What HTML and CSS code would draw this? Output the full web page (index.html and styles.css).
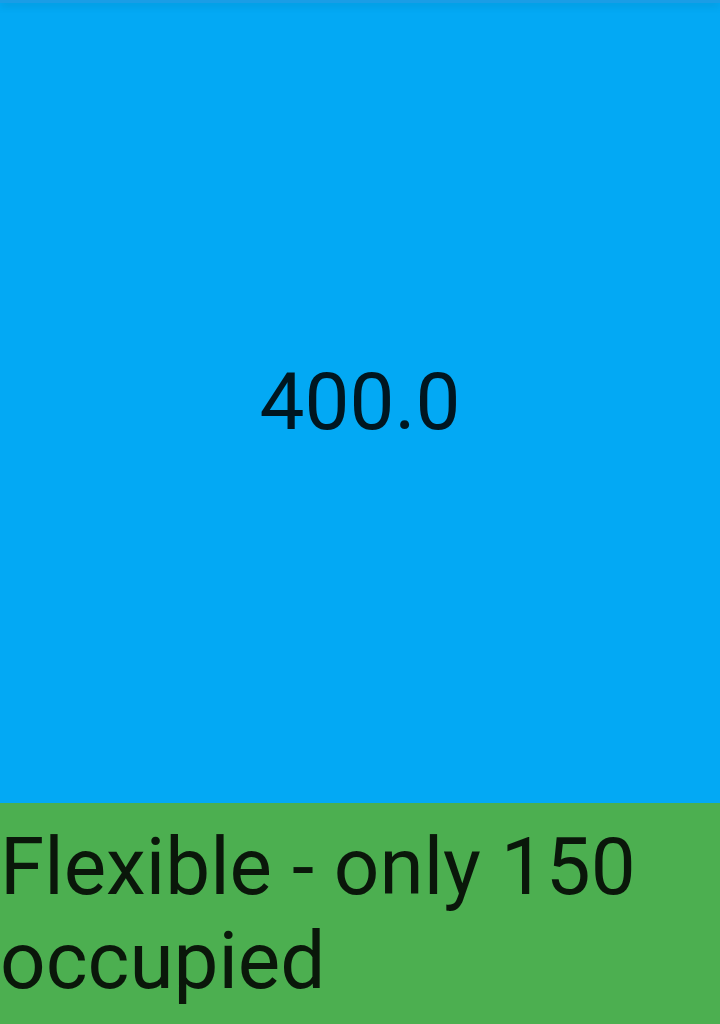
FILE: index.html
```html
<!DOCTYPE html>
<html>
<head>
<meta charset="utf-8">
<link rel="stylesheet" href="styles.css">
</head>
<body>
<div class="screen">
  <div class="topbar"></div>
  <div class="fixed">
    <span class="value">400.0</span>
  </div>
  <div class="flexible">
    <p class="label">Flexible - only 150 occupied</p>
  </div>
</div>
</body>
</html>
```

FILE: styles.css
```css
html, body {
  margin: 0;
  padding: 0;
  height: 100%;
}
body {
  font-family: Roboto, "Noto Sans", sans-serif;
  background: #4caf50;
}
.screen {
  display: flex;
  flex-direction: column;
  height: 1024px;
  overflow: hidden;
}
.topbar {
  height: 3px;
  background: #1a9de6;
  flex: none;
  position: relative;
  z-index: 2;
  box-shadow: 0 2px 8px rgba(0, 0, 0, 0.18);
}
.fixed {
  height: 800px;
  flex: none;
  background: #03a9f4;
  display: flex;
  align-items: center;
  justify-content: center;
}
.value {
  font-size: 80px;
  color: rgba(0, 0, 0, 0.87);
  line-height: 1.172;
}
.flexible {
  flex: 1;
  background: #4caf50;
  padding-top: 18px;
}
.label {
  margin: 0;
  font-size: 80px;
  line-height: 1.172;
  color: rgba(0, 0, 0, 0.87);
}
```
